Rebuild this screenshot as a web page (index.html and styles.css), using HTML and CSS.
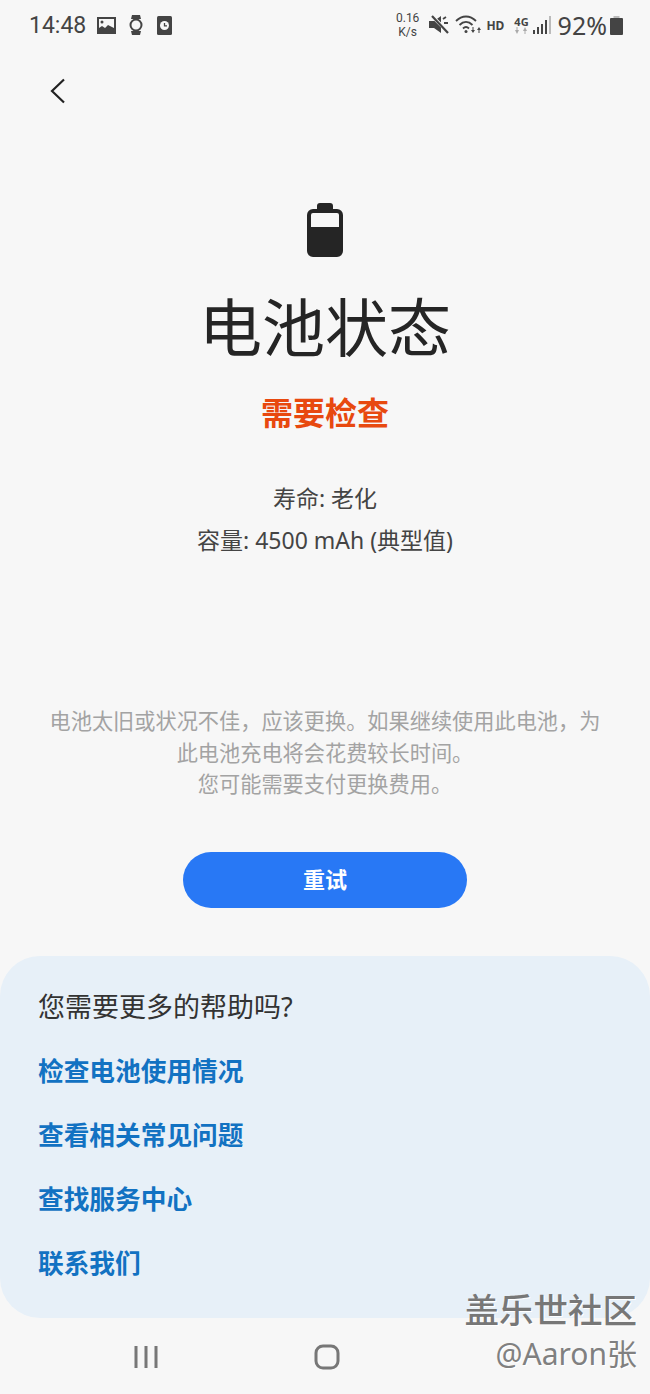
FILE: index.html
```html
<!DOCTYPE html>
<html lang="zh-CN">
<head>
  <meta charset="UTF-8">
  <title>电池状态</title>
  <link rel="stylesheet" href="styles.css">
</head>
<body>
  <div class="screen">
    <div class="status-bar">
      <div class="status-left">
        <span class="clock">14:48</span>
        <svg class="ic-pic" viewBox="0 0 19 17"><path fill="#444" fill-rule="evenodd" d="M0 0h19v17H0zM2 2v9l3-2 3 2 3-3 6 3V2zM5 3.500a1.500 1.500 0 1 1 0 3 1.500 1.500 0 0 1 0-3z"/></svg>
        <svg class="ic-watch" viewBox="0 0 14 20"><path fill="#444" d="M3 0h8l1 4H2zM2 16h10l-1 4H3z"/><circle cx="7" cy="10" r="5.500" fill="none" stroke="#444" stroke-width="2"/></svg>
        <svg class="ic-clock" viewBox="0 0 15 19"><rect width="15" height="19" rx="1.500" fill="#444"/><circle cx="7.500" cy="9.500" r="4.500" fill="#f7f7f7"/><path d="M7.500 7v2.800h2.500" fill="none" stroke="#444" stroke-width="1.300"/></svg>
      </div>
      <div class="status-right">
        <span class="speed">0.16<br>K/s</span>
        <svg class="ic-mute" viewBox="0 0 20 20"><path fill="#444" d="M0 6h5l7-5v17l-7-5H0z"/><path d="M2 0l18 18" stroke="#f7f7f7" stroke-width="3.500"/><path d="M3 1l16 17" stroke="#444" stroke-width="2.200"/><path d="M14 4l3-2M15 8h4" stroke="#444" stroke-width="1.800"/></svg>
        <svg class="ic-wifi" viewBox="0 0 26 20"><g fill="none" stroke="#444" stroke-width="1.800"><path d="M1 6c6-6 14-6 20 0"/><path d="M4.500 10c4-4 9-4 13 0"/><path d="M8 13.500c2-2 4-2 6 0"/></g><circle cx="11" cy="16.500" r="1.500" fill="#444"/><path fill="#444" d="M16 15h1.500v-3h1v3H20l-2 3zM22 15l2-3 2 3h-1.500v3h-1v-3z"/></svg>
        <span class="hd">HD</span>
        <span class="net">4G<svg viewBox="0 0 14 7"><path fill="#aaa" d="M1 3h1.500V0h1v3H5L3 7zM9 4l2-4 2 4h-1.500v3h-1V4z"/></svg></span>
        <svg class="ic-signal" viewBox="0 0 18 18"><g fill="#444"><rect x="0" y="14" width="2" height="4"/><rect x="4" y="11" width="2" height="7"/><rect x="8" y="8" width="2" height="10"/><rect x="12" y="4" width="2" height="14"/></g><rect x="16" y="0" width="2" height="18" fill="#bbb"/></svg>
        <span class="percent">92%</span>
        <svg class="ic-bat-small" viewBox="0 0 13 19"><path fill="#bbb" d="M3.500 0h6v2h-6z"/><rect y="2" width="13" height="17" rx="1" fill="#444"/></svg>
      </div>
    </div>

    <div class="top-nav">
      <svg class="back" viewBox="0 0 16 26"><path d="M14 1.500L2 13l12 11.500" fill="none" stroke="#222" stroke-width="2.200"/></svg>
    </div>

    <main class="result">
      <svg class="battery" viewBox="0 0 36 54">
        <path fill="#252525" d="M13 0h10a3 3 0 0 1 3 3v3h4a6 6 0 0 1 6 6v36a6 6 0 0 1-6 6H6a6 6 0 0 1-6-6V12a6 6 0 0 1 6-6h4V3a3 3 0 0 1 3-3z"/>
        <path fill="#f7f7f7" d="M6 10h24a2 2 0 0 1 2 2v12H4V12a2 2 0 0 1 2-2z"/>
      </svg>
      <h1>电池状态</h1>
      <p class="state">需要检查</p>
      <div class="specs">
        <p>寿命: 老化</p>
        <p>容量: 4500 mAh (典型值)</p>
      </div>
      <p class="desc">电池太旧或状况不佳，应该更换。如果继续使用此电池，为<br>此电池充电将会花费较长时间。<br>您可能需要支付更换费用。</p>
      <button class="retry">重试</button>
    </main>

    <section class="help">
      <h2>您需要更多的帮助吗?</h2>
      <a href="#">检查电池使用情况</a>
      <a href="#">查看相关常见问题</a>
      <a href="#">查找服务中心</a>
      <a href="#">联系我们</a>
    </section>

    <nav class="nav-bar">
      <svg class="nav-recent" viewBox="0 0 24 24"><path d="M2 1v22M12 1v22M22 1v22" stroke="#777" stroke-width="3"/></svg>
      <svg class="nav-home" viewBox="0 0 26 26"><rect x="2" y="2" width="22" height="22" rx="7" fill="none" stroke="#777" stroke-width="3"/></svg>
    </nav>

    <div class="watermark">
      <span class="wm-title">盖乐世社区</span>
      <span class="wm-name">@Aaron张</span>
    </div>
  </div>
</body>
</html>
```
FILE: styles.css
```css
* {
  box-sizing: border-box;
}

body {
  margin: 0;
  background: #f7f7f7;
  font-family: "Noto Sans", "Noto Sans CJK SC", sans-serif;
  color: #333;
}

p, h1, h2 {
  margin: 0;
  font-weight: normal;
}

.screen {
  position: relative;
  width: 650px;
  height: 1394px;
  overflow: hidden;
  display: flex;
  flex-direction: column;
}

.status-bar {
  height: 50px;
  padding: 0 27px 0 29px;
  display: flex;
  justify-content: space-between;
  align-items: center;
  color: #444;
}

.status-left {
  display: flex;
  align-items: center;
}

.clock {
  font-family: "Roboto", sans-serif;
  font-size: 23px;
  margin-right: 11px;
}

.ic-pic { width: 19px; height: 17px; margin-right: 13px; }
.ic-watch { width: 14px; height: 20px; margin-right: 14px; }
.ic-clock { width: 15px; height: 19px; }

.status-right {
  display: flex;
  align-items: center;
}

.speed {
  font-family: "Roboto", sans-serif;
  font-size: 12px;
  line-height: 14px;
  text-align: center;
  margin-right: 10px;
}

.ic-mute { width: 20px; height: 20px; margin-right: 6px; }
.ic-wifi { width: 26px; height: 20px; margin-right: 5px; }

.hd {
  font-size: 12px;
  font-weight: 700;
  margin-right: 10px;
}

.net {
  display: flex;
  flex-direction: column;
  align-items: center;
  font-size: 11px;
  font-weight: 700;
  line-height: 11px;
  margin-right: 4px;
}

.net svg { width: 14px; height: 7px; }

.ic-signal { width: 18px; height: 18px; margin-right: 7px; }

.percent {
  font-size: 25px;
  margin-right: 3px;
}

.ic-bat-small { width: 13px; height: 19px; }

.top-nav {
  height: 153px;
  padding: 28px 0 0 50px;
}

.back {
  display: block;
  width: 16px;
  height: 26px;
}

.result {
  display: flex;
  flex-direction: column;
  align-items: center;
  text-align: center;
}

.battery {
  width: 36px;
  height: 54px;
}

h1 {
  margin-top: 24px;
  font-size: 63px;
  line-height: 92px;
  color: #252525;
}

.state {
  margin-top: 18px;
  font-size: 32px;
  line-height: 44px;
  font-weight: 700;
  color: #e8490f;
}

.specs {
  margin-top: 42px;
  font-size: 23px;
  line-height: 42px;
  color: #444;
}

.desc {
  margin-top: 144px;
  font-size: 21.200px;
  line-height: 31.500px;
  color: #a3a3a3;
  white-space: nowrap;
}

.retry {
  margin-top: 52px;
  width: 284px;
  height: 56px;
  padding: 0 0 4px;
  border: none;
  border-radius: 28px;
  background: #2878f5;
  color: #fff;
  font-family: inherit;
  font-size: 22px;
  font-weight: 700;
}

.help {
  margin-top: 48px;
  height: 362px;
  padding: 32px 38px 0;
  background: #e7f0f8;
  border-radius: 40px;
  display: flex;
  flex-direction: column;
}

.help h2 {
  font-size: 27px;
  line-height: 38px;
  color: #333;
  margin-bottom: 14px;
}

.help a {
  font-size: 25.700px;
  line-height: 64px;
  font-weight: 700;
  color: #1272c2;
  text-decoration: none;
}

.nav-bar {
  flex: 1;
  display: flex;
  align-items: center;
  gap: 156px;
  padding: 2px 0 0 134px;
}

.nav-recent { width: 24px; height: 24px; }
.nav-home { width: 26px; height: 26px; }

.watermark {
  position: absolute;
  right: 13px;
  top: 1286px;
  display: flex;
  flex-direction: column;
  align-items: flex-end;
  color: #808080;
  text-shadow: 1px 1px 0 #fff;
}

.wm-title {
  font-size: 34.500px;
  line-height: 47px;
  font-weight: 500;
  color: #777;
}

.wm-name {
  font-size: 30px;
  line-height: 42px;
}
```
